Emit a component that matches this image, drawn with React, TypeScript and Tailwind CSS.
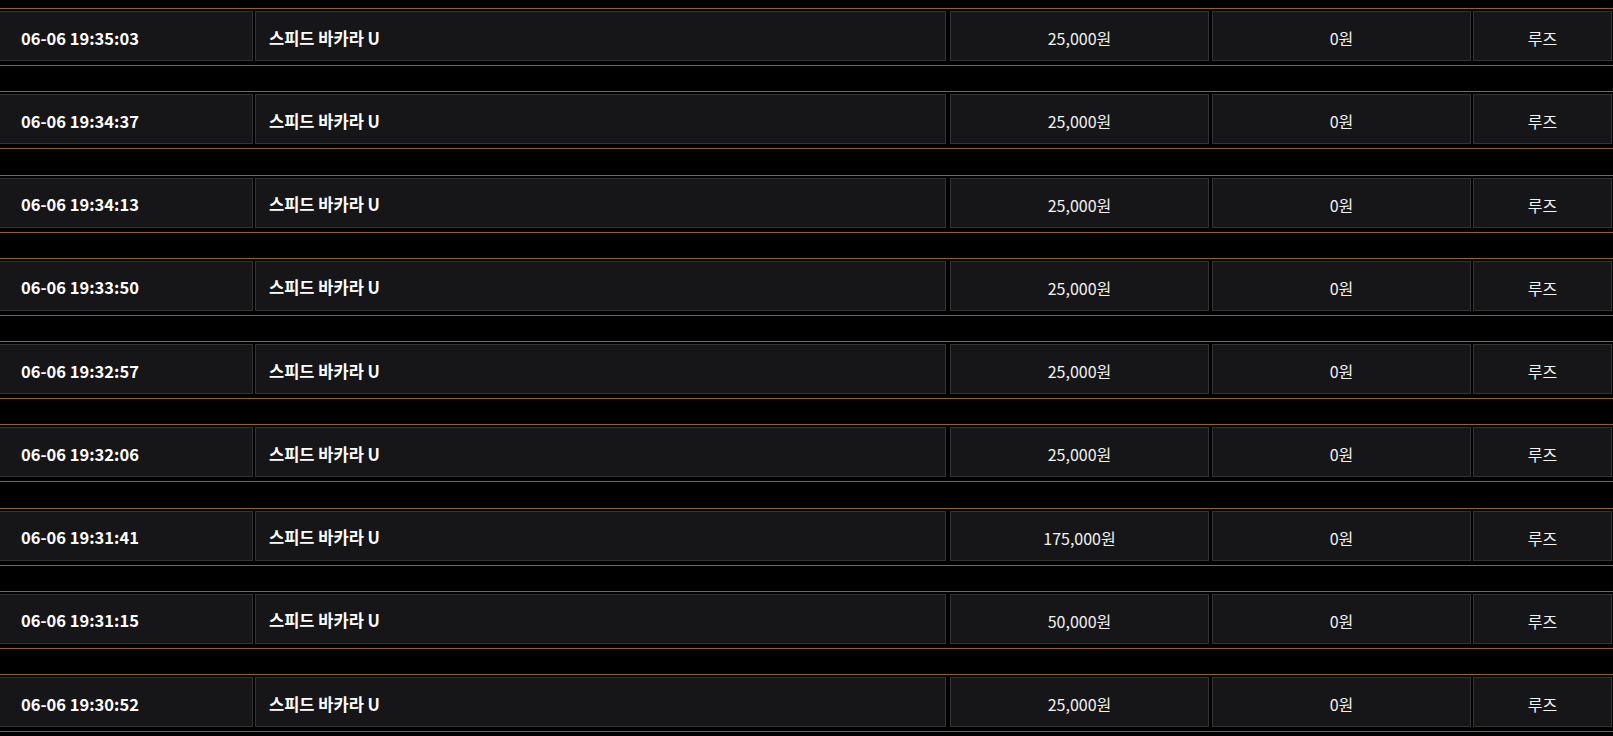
import React from "react";

const rows = [
  { t: "06-06 19:35:03", bet: "25,000원" },
  { t: "06-06 19:34:37", bet: "25,000원" },
  { t: "06-06 19:34:13", bet: "25,000원" },
  { t: "06-06 19:33:50", bet: "25,000원" },
  { t: "06-06 19:32:57", bet: "25,000원" },
  { t: "06-06 19:32:06", bet: "25,000원" },
  { t: "06-06 19:31:41", bet: "175,000원" },
  { t: "06-06 19:31:15", bet: "50,000원" },
  { t: "06-06 19:30:52", bet: "25,000원" },
];

export default function App() {
  return (
    <div
      className="w-[1613px] h-[736px] overflow-hidden bg-black pt-[8px]"
      style={{ fontFamily: '"Noto Sans CJK KR", "Noto Sans", sans-serif' }}
    >
      {rows.map((r, i) => (
        <div
          key={i}
          className="border-y border-[#8a6a12] pt-[2px] pb-[4px] mb-[25.25px]"
        >
          <div className="flex h-[50px] text-[16px] text-white">
            <div className="w-[253px] shrink-0 flex items-center bg-[#161618] border border-l-0 border-[#333335] pl-[21px] pt-[4px] font-bold text-[16.5px]">
              {r.t}
            </div>
            <div className="ml-[2px] w-[691px] shrink-0 flex items-center bg-[#161618] border border-[#333335] pl-[13px] pt-[4px] font-bold text-[16.5px]">
              스피드 바카라 U
            </div>
            <div className="ml-[4px] w-[259px] shrink-0 flex items-center justify-center bg-[#161618] border border-[#333335] pt-[4px] text-[#f2f2f2]">
              {r.bet}
            </div>
            <div className="ml-[3px] w-[259px] shrink-0 flex items-center justify-center bg-[#161618] border border-[#333335] pt-[4px] text-[#f2f2f2]">
              0원
            </div>
            <div className="ml-[2px] w-[139px] shrink-0 flex items-center justify-center bg-[#161618] border border-[#333335] pt-[4px] text-[#f2f2f2]">
              루즈
            </div>
          </div>
        </div>
      ))}
    </div>
  );
}
